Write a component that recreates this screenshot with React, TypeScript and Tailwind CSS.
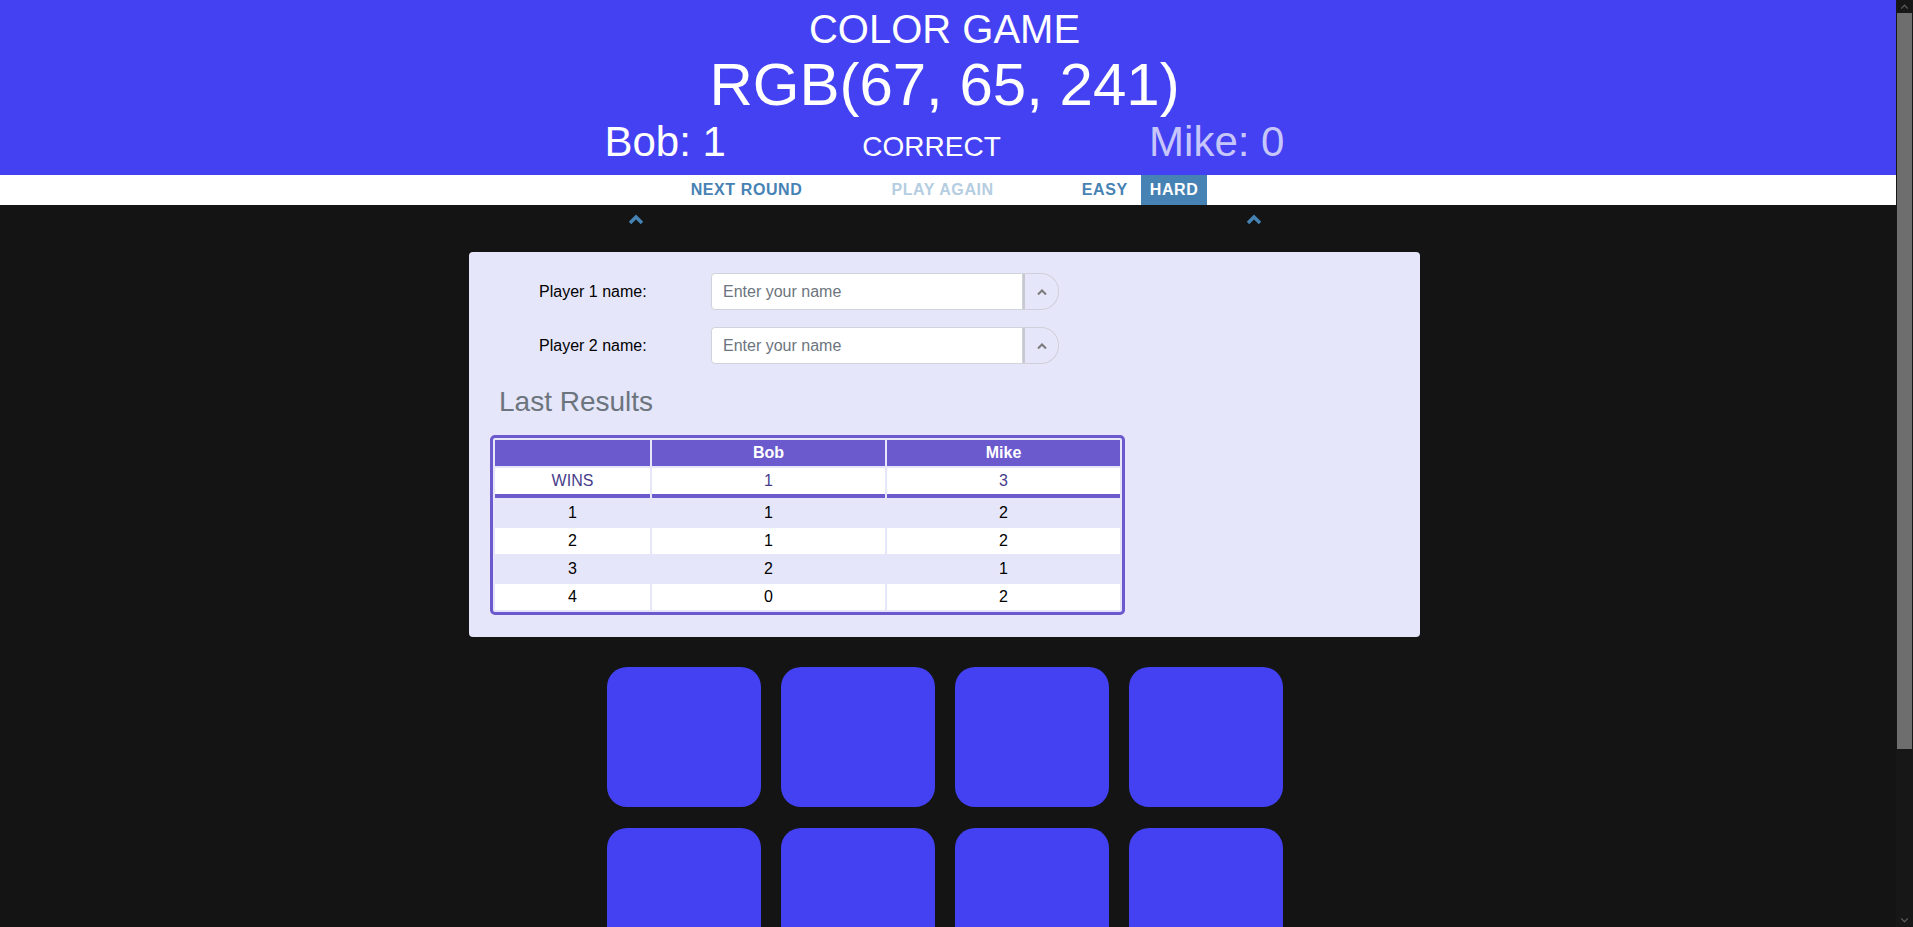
import { useState } from "react";

type Mode = "easy" | "hard";

const results = [
  { round: 1, bob: 1, mike: 2 },
  { round: 2, bob: 1, mike: 2 },
  { round: 3, bob: 2, mike: 1 },
  { round: 4, bob: 0, mike: 2 },
];

function ChevronUp({ className }: { className?: string }) {
  return (
    <svg viewBox="0 0 16 10" className={className} fill="none" stroke="currentColor" strokeWidth="3.5">
      <polyline points="2,9 8,3 14,9" />
    </svg>
  );
}

function NameField({ label }: { label: string }) {
  return (
    <div className="flex items-center h-[37px]">
      <label className="w-[221px] pl-[49px] text-[16px] text-black">{label}</label>
      <div className="flex h-full w-[348px]">
        <input
          type="text"
          placeholder="Enter your name"
          className="h-full flex-1 bg-white border border-[#ced4da] rounded-l-[4px] pl-[11px] text-[16px] placeholder:text-[#6c757d] focus:outline-none"
        />
        <button className="h-full w-[36px] flex items-center justify-center border border-l-2 border-[#d0d0da] border-l-[#c8c8d0] rounded-r-[18px] text-[#7a7a7a]">
          <svg viewBox="0 0 10 6" className="w-[10px] h-[6px]" fill="none" stroke="currentColor" strokeWidth="2">
            <polyline points="1,5.5 5,1.5 9,5.5" />
          </svg>
        </button>
      </div>
    </div>
  );
}

// the browser's scrollbar as it shows in the screenshot
function Scrollbar() {
  return (
    <div aria-hidden className="fixed top-0 right-0 h-screen w-[17px] bg-[#171717] flex flex-col items-center">
      <svg viewBox="0 0 10 6" className="mt-[4px] w-[9px] h-[5px] text-[#5a5a5a]" fill="none" stroke="currentColor" strokeWidth="1.5">
        <polyline points="1,5.5 5,1.5 9,5.5" />
      </svg>
      <div className="mt-[4px] w-[15px] h-[736px] bg-[#6e6e6e]" />
      <div className="flex-1" />
      <svg viewBox="0 0 10 6" className="mb-[4px] w-[9px] h-[5px] text-[#5a5a5a]" fill="none" stroke="currentColor" strokeWidth="1.5">
        <polyline points="1,0.5 5,4.5 9,0.5" />
      </svg>
    </div>
  );
}

export default function App() {
  const [mode, setMode] = useState<Mode>("hard");

  return (
    <div className="min-h-screen bg-[#141414] font-['Liberation_Sans',Arial,sans-serif]">
      <header className="bg-[#4341f1] text-white pt-[9px] pb-[12px]">
        <div className="pr-[24px] flex flex-col items-center">
          <h1 className="text-[40px] leading-[40px]">COLOR GAME</h1>
          <h2 className="mt-[6px] text-[60px] leading-[60px]">RGB(67, 65, 241)</h2>
          <div className="mt-[6px] h-[42px] w-[680px] flex items-baseline justify-between">
            <span className="text-[42px] leading-[42px]">Bob: 1</span>
            <span className="mr-[12px] text-[28px] leading-[28px]">CORRECT</span>
            <span className="text-[42px] leading-[42px] text-[#c7c6fb]">Mike: 0</span>
          </div>
        </div>
      </header>

      <nav className="bg-white h-[30px] pr-[24px] flex justify-center">
        <div className="flex text-[16px] leading-[30px] font-bold tracking-[0.6px]">
          <button className="px-[9px] text-[#4682b4]">NEXT ROUND</button>
          <button className="ml-[71px] px-[9px] text-[#b5cde1]">PLAY AGAIN</button>
          <button
            onClick={() => setMode("easy")}
            className={`ml-[70px] px-[9px] ${mode === "easy" ? "bg-[#4682b4] text-white" : "text-[#4682b4]"}`}
          >
            EASY
          </button>
          <button
            onClick={() => setMode("hard")}
            className={`ml-[4px] px-[9px] ${mode === "hard" ? "bg-[#4682b4] text-white" : "text-[#4682b4]"}`}
          >
            HARD
          </button>
        </div>
      </nav>

      <div className="h-[47px] pt-[9px] pr-[24px] flex justify-center">
        <div className="w-[634px] flex justify-between text-[#4682b4]">
          <ChevronUp className="w-[16px] h-[10px]" />
          <ChevronUp className="w-[16px] h-[10px]" />
        </div>
      </div>

      <main className="pr-[24px] flex flex-col items-center">
        <section className="w-[951px] bg-[#e6e6fa] rounded-[4px] pt-[21px] pb-[22px] pl-[21px]">
          <div className="flex flex-col gap-[17px]">
            <NameField label="Player 1 name:" />
            <NameField label="Player 2 name:" />
          </div>

          <h3 className="mt-[21px] pl-[9px] text-[28px] leading-[33.6px] text-[#6c757d]">Last Results</h3>

          <div className="mt-[16px] w-fit border-[3px] border-[#6a5acd] rounded-[5px] bg-[#e6e6fa]">
            <table className="border-separate border-spacing-[2px] table-fixed text-[16px] text-center">
              <colgroup>
                <col className="w-[155px]" />
                <col className="w-[233px]" />
                <col className="w-[233px]" />
              </colgroup>
              <thead>
                <tr className="h-[26px] bg-[#6a5acd] text-white font-bold">
                  <th className="p-0"></th>
                  <th className="p-0">Bob</th>
                  <th className="p-0">Mike</th>
                </tr>
              </thead>
              <tbody>
                <tr className="text-[#483d8b]">
                  <td className="h-[30px] p-0 bg-white border-b-4 border-[#6a5acd]">WINS</td>
                  <td className="h-[30px] p-0 bg-white border-b-4 border-[#6a5acd]">1</td>
                  <td className="h-[30px] p-0 bg-white border-b-4 border-[#6a5acd]">3</td>
                </tr>
                {results.map((r, i) => (
                  <tr key={r.round} className={`h-[26px] text-black ${i % 2 === 0 ? "bg-[#e6e6fa]" : "bg-white"}`}>
                    <td className="p-0">{r.round}</td>
                    <td className="p-0">{r.bob}</td>
                    <td className="p-0">{r.mike}</td>
                  </tr>
                ))}
              </tbody>
            </table>
          </div>
        </section>

        <div className="mt-[30px] grid grid-cols-[repeat(4,154px)] gap-x-[20px] gap-y-[21px]">
          {Array.from({ length: 12 }).map((_, i) => (
            <div key={i} className="h-[140px] rounded-[20px] bg-[#4341f1] cursor-pointer" />
          ))}
        </div>
      </main>

      <Scrollbar />
    </div>
  );
}
